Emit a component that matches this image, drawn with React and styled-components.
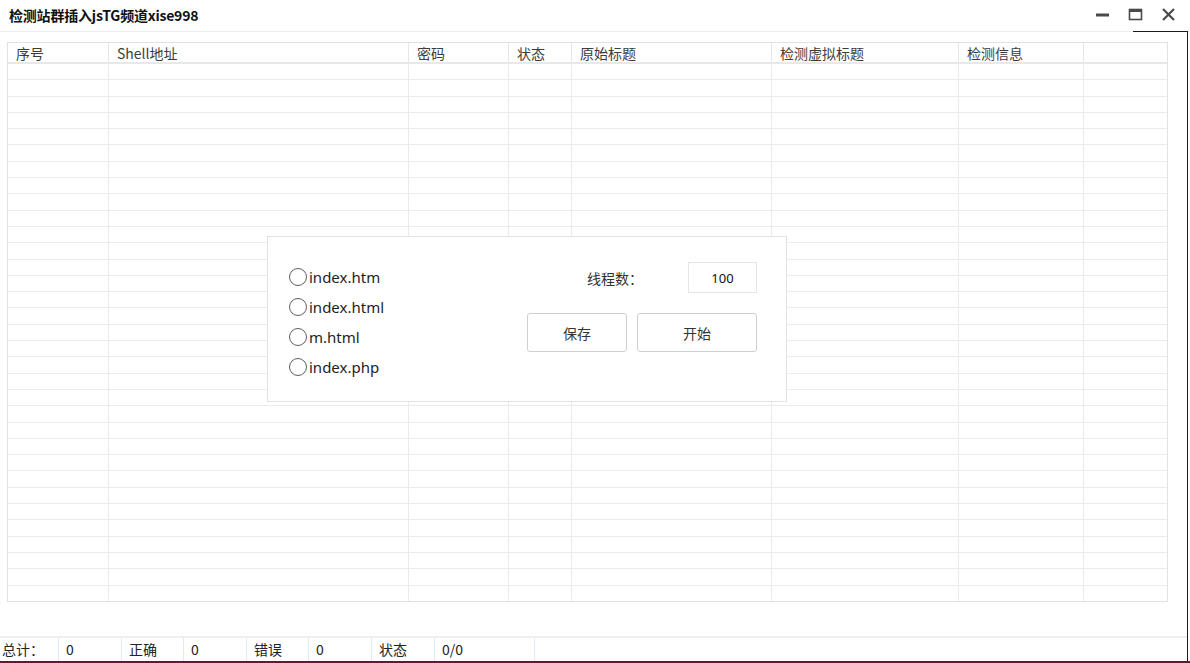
import React from 'react';
import styled, { createGlobalStyle } from 'styled-components';

const GlobalStyle = createGlobalStyle`
  html, body {
    margin: 0;
    padding: 0;
    background: #ffffff;
    overflow: hidden;
  }
  * {
    box-sizing: border-box;
  }
`;

const columns = [
  { title: '序号', width: 101 },
  { title: 'Shell地址', width: 300 },
  { title: '密码', width: 100 },
  { title: '状态', width: 63 },
  { title: '原始标题', width: 200 },
  { title: '检测虚拟标题', width: 187 },
  { title: '检测信息', width: 125 },
  { title: '', width: 84 },
];

const gridColumns = columns.map(c => `${c.width}px`).join(' ');

const rowCount = 33;

const statusCells = [
  { text: '总计：', width: 59, first: true },
  { text: '0', width: 63 },
  { text: '正确', width: 62 },
  { text: '0', width: 63 },
  { text: '错误', width: 62 },
  { text: '0', width: 63 },
  { text: '状态', width: 63 },
  { text: '0/0', width: 100 },
];

const fileOptions = ['index.htm', 'index.html', 'm.html', 'index.php'];

const Window = styled.div`
  position: relative;
  width: 1190px;
  height: 663px;
  display: flex;
  flex-direction: column;
  background: #fff;
  border-bottom: 2px solid #5c1d33;
  font-family: "Noto Sans CJK SC", "Noto Sans", sans-serif;
  color: #333;
`;

const TitleBar = styled.div`
  height: 32px;
  flex-shrink: 0;
  display: flex;
  align-items: center;
  justify-content: space-between;
  padding: 0 14px 2px 9px;
  border-bottom: 1px solid #ececec;
`;

const Title = styled.div`
  font-size: 14px;
  font-weight: bold;
  color: #111;
  letter-spacing: -0.2px;
`;

const Controls = styled.div`
  display: flex;
  align-items: center;
  gap: 18px;
`;

const ControlIcon = styled.svg`
  width: 15px;
  height: 15px;
  display: block;
`;

const FrameEdge = styled.div`
  position: absolute;
  top: 31px;
  left: 1133px;
  right: 2px;
  bottom: 0;
  border-top: 1px solid #1b1b1b;
  border-right: 1px solid #1b1b1b;
  pointer-events: none;
`;

const Content = styled.div`
  position: relative;
  flex: 1;
  padding: 10px 0 0 7px;
`;

const Table = styled.div`
  width: 1161px;
  height: 560px;
  border: 1px solid #e2e2e2;
  display: flex;
  flex-direction: column;
`;

const HeaderRow = styled.div`
  display: grid;
  grid-template-columns: ${gridColumns};
  height: 21px;
  flex-shrink: 0;
  border-bottom: 2px solid #e8e8e8;
`;

const HeaderCell = styled.div`
  padding-left: 8px;
  font-size: 14px;
  line-height: 20px;
  color: #3c3c3c;
  border-right: ${props => (props.last ? 'none' : '1px solid #e6e6e6')};
  white-space: nowrap;
  overflow: hidden;
`;

const Body = styled.div`
  flex: 1;
  display: flex;
  flex-direction: column;
`;

const Row = styled.div`
  flex: 1;
  display: grid;
  grid-template-columns: ${gridColumns};
  border-bottom: ${props => (props.last ? 'none' : '1px solid #ebebeb')};
`;

const Cell = styled.div`
  border-right: ${props => (props.last ? 'none' : '1px solid #ebebeb')};
`;

const Panel = styled.div`
  position: absolute;
  left: 267px;
  top: 204px;
  width: 520px;
  height: 166px;
  background: #fff;
  border: 1px solid #e2e2e2;
  display: flex;
  justify-content: space-between;
  padding: 25px 29px 0 21px;
`;

const RadioList = styled.div`
  display: flex;
  flex-direction: column;
`;

const RadioRow = styled.label`
  height: 30px;
  display: flex;
  align-items: center;
  font-family: "Noto Sans", "Open Sans", sans-serif;
  font-size: 15px;
  color: #1e1e1e;
`;

const RadioCircle = styled.span`
  width: 18px;
  height: 18px;
  border-radius: 50%;
  border: 1.5px solid #5e5e5e;
  margin-right: 2px;
  flex-shrink: 0;
`;

const Controls2 = styled.div`
  width: 230px;
  display: flex;
  flex-direction: column;
`;

const ThreadRow = styled.div`
  height: 31px;
  display: flex;
  align-items: center;
  padding-left: 60px;
`;

const ThreadLabel = styled.span`
  font-size: 14px;
  color: #333;
`;

const ThreadInput = styled.div`
  margin-left: auto;
  width: 69px;
  height: 31px;
  border: 1px solid #e6e6e6;
  display: flex;
  align-items: center;
  justify-content: center;
  font-family: "Noto Sans", sans-serif;
  font-size: 13px;
  color: #111;
`;

const ButtonRow = styled.div`
  display: flex;
  gap: 10px;
  margin-top: 20px;
`;

const Button = styled.button`
  width: ${props => props.width}px;
  height: 39px;
  background: #fff;
  border: 1px solid #cfcfcf;
  border-radius: 3px;
  font-family: "Noto Sans CJK SC", sans-serif;
  font-size: 14px;
  color: #333;
  padding: 0;
`;

const StatusBar = styled.div`
  margin-top: auto;
  height: 25px;
  flex-shrink: 0;
  margin-right: 3px;
  border-top: 2px solid #efefef;
  display: flex;
`;

const StatusCell = styled.div`
  width: ${props => props.width}px;
  padding-left: ${props => (props.first ? 2 : 7)}px;
  font-size: 14px;
  line-height: 22px;
  color: #222;
  border-right: 1px solid #dcebf8;
  white-space: nowrap;
`;

const Minimize = () => (
  <ControlIcon viewBox="0 0 15 15">
    <rect x="1" y="6.5" width="13" height="3" fill="#4a4a4a" />
  </ControlIcon>
);

const Maximize = () => (
  <ControlIcon viewBox="0 0 15 15">
    <rect x="1.5" y="2.5" width="12" height="10" fill="none" stroke="#4a4a4a" strokeWidth="1.6" />
    <rect x="1" y="2" width="13" height="3" fill="#4a4a4a" />
  </ControlIcon>
);

const Close = () => (
  <ControlIcon viewBox="0 0 15 15">
    <path d="M2 2 L13 13 M13 2 L2 13" stroke="#4a4a4a" strokeWidth="2.2" />
  </ControlIcon>
);

const App = () => (
  <>
    <GlobalStyle />
    <Window>
      <TitleBar>
        <Title>检测站群插入jsTG频道xise998</Title>
        <Controls>
          <Minimize />
          <Maximize />
          <Close />
        </Controls>
      </TitleBar>
      <FrameEdge />
      <Content>
        <Table>
          <HeaderRow>
            {columns.map((c, i) => (
              <HeaderCell key={c.title || i} last={i === columns.length - 1}>
                {c.title}
              </HeaderCell>
            ))}
          </HeaderRow>
          <Body>
            {Array.from({ length: rowCount }).map((_, r) => (
              <Row key={r} last={r === rowCount - 1}>
                {columns.map((c, i) => (
                  <Cell key={i} last={i === columns.length - 1} />
                ))}
              </Row>
            ))}
          </Body>
        </Table>
        <Panel>
          <RadioList>
            {fileOptions.map(name => (
              <RadioRow key={name}>
                <RadioCircle />
                {name}
              </RadioRow>
            ))}
          </RadioList>
          <Controls2>
            <ThreadRow>
              <ThreadLabel>线程数：</ThreadLabel>
              <ThreadInput>100</ThreadInput>
            </ThreadRow>
            <ButtonRow>
              <Button width={100}>保存</Button>
              <Button width={120}>开始</Button>
            </ButtonRow>
          </Controls2>
        </Panel>
      </Content>
      <StatusBar>
        {statusCells.map((s, i) => (
          <StatusCell key={i} width={s.width} first={s.first}>
            {s.text}
          </StatusCell>
        ))}
      </StatusBar>
    </Window>
  </>
);

export default App;
